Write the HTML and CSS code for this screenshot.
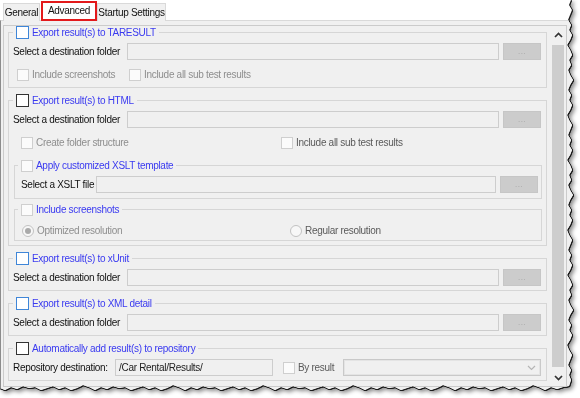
FILE: index.html
```html
<!DOCTYPE html>
<html lang="en">
<head>
    <meta charset="UTF-8">
    <title>Options - Advanced</title>
    <link rel="stylesheet" href="styles.css">
</head>
<body>
<div class="shot">
    <div class="window">
        <div class="tabs">
            <div class="tab">General</div>
            <div class="tab active">Advanced</div>
            <div class="tab">Startup Settings</div>
        </div>
        <div class="panel">
            <div class="scrollbox">
                <div class="content">

                    <!-- TARESULT -->
                    <fieldset class="group">
                        <legend><span class="cb focus"></span><span class="title">Export result(s) to TARESULT</span></legend>
                        <div class="row">
                            <span class="label">Select a destination folder</span>
                            <span class="input"></span>
                            <span class="browse">...</span>
                        </div>
                        <div class="row checks first-checks">
                            <span class="check"><span class="cb small dis"></span>Include screenshots</span>
                            <span class="check"><span class="cb small dis"></span>Include all sub test results</span>
                        </div>
                    </fieldset>

                    <!-- HTML -->
                    <fieldset class="group">
                        <legend><span class="cb"></span><span class="title">Export result(s) to HTML</span></legend>
                        <div class="row">
                            <span class="label">Select a destination folder</span>
                            <span class="input"></span>
                            <span class="browse">...</span>
                        </div>
                        <div class="row checks html-checks">
                            <span class="check"><span class="cb small dis"></span>Create folder structure</span>
                            <span class="check darker"><span class="cb small dis"></span>Include all sub test results</span>
                        </div>

                        <fieldset class="group nested">
                            <legend><span class="cb small dis"></span><span class="title">Apply customized XSLT template</span></legend>
                            <div class="row">
                                <span class="label xslt-label">Select a XSLT file</span>
                                <span class="input"></span>
                                <span class="browse">...</span>
                            </div>
                        </fieldset>

                        <fieldset class="group nested shots">
                            <legend><span class="cb small dis"></span><span class="title">Include screenshots</span></legend>
                            <div class="row radios">
                                <span class="check"><span class="radio on"></span>Optimized resolution</span>
                                <span class="check darker"><span class="radio"></span>Regular resolution</span>
                            </div>
                        </fieldset>
                    </fieldset>

                    <!-- xUnit -->
                    <fieldset class="group">
                        <legend><span class="cb focus"></span><span class="title">Export result(s) to xUnit</span></legend>
                        <div class="row">
                            <span class="label">Select a destination folder</span>
                            <span class="input"></span>
                            <span class="browse">...</span>
                        </div>
                    </fieldset>

                    <!-- XML detail -->
                    <fieldset class="group">
                        <legend><span class="cb focus"></span><span class="title">Export result(s) to XML detail</span></legend>
                        <div class="row">
                            <span class="label">Select a destination folder</span>
                            <span class="input"></span>
                            <span class="browse">...</span>
                        </div>
                    </fieldset>

                    <!-- repository -->
                    <fieldset class="group">
                        <legend><span class="cb"></span><span class="title">Automatically add result(s) to repository</span></legend>
                        <div class="row">
                            <span class="label repo-label">Repository destination:</span>
                            <span class="input repo-input">/Car Rental/Results/</span>
                            <span class="check by-result darker"><span class="cb small dis"></span>By result</span>
                            <span class="combo">
                                <svg width="9" height="6" viewBox="0 0 9 6"><path d="M1 1 L4.5 4.5 L8 1" fill="none" stroke="#b5b5b5" stroke-width="1.2"/></svg>
                            </span>
                        </div>
                    </fieldset>

                </div>
                <div class="scrollbar">
                    <div class="sb-btn">
                        <svg width="9" height="6" viewBox="0 0 9 6"><path d="M1 5 L4.5 1.5 L8 5" fill="none" stroke="#333" stroke-width="1.7"/></svg>
                    </div>
                    <div class="sb-thumb"></div>
                    <div class="sb-btn">
                        <svg width="9" height="6" viewBox="0 0 9 6"><path d="M1 1 L4.5 4.5 L8 1" fill="none" stroke="#333" stroke-width="1.7"/></svg>
                    </div>
                </div>
            </div>
        </div>
    </div>
</div>
</body>
</html>
```

FILE: styles.css
```css
body {
    margin: 0;
    background: #fff;
    font-family: "Liberation Sans", Arial, sans-serif;
    font-size: 10px;
    letter-spacing: -0.3px;
    color: #111;
}

/* screenshot with torn right / bottom edge */
.shot {
    width: 580px;
    height: 398px;
    filter: drop-shadow(1px 0 0 #1c1c1c) drop-shadow(0 1px 0 #1c1c1c) drop-shadow(2px 2px 2px rgba(0, 0, 0, 0.45));
}

.window {
    width: 576px;
    height: 394px;
    background: #fff;
    clip-path: polygon(0 0, 571px 0, 569px 5px, 572px 10px, 570px 15px, 568px 20px, 571px 25px, 569px 30px, 572px 35px, 570px 40px, 567px 45px, 570px 50px, 572px 55px, 569px 60px, 571px 65px, 568px 70px, 570px 75px, 573px 80px, 570px 85px, 568px 90px, 571px 95px, 569px 100px, 572px 105px, 570px 110px, 567px 115px, 569px 120px, 572px 125px, 570px 130px, 568px 135px, 571px 140px, 569px 145px, 572px 150px, 570px 155px, 567px 160px, 570px 165px, 572px 170px, 569px 175px, 571px 180px, 568px 185px, 570px 190px, 573px 195px, 570px 200px, 568px 205px, 571px 210px, 569px 215px, 572px 220px, 570px 225px, 567px 230px, 569px 235px, 572px 240px, 570px 245px, 568px 250px, 571px 255px, 569px 260px, 572px 265px, 570px 270px, 567px 275px, 570px 280px, 572px 285px, 569px 290px, 571px 295px, 568px 300px, 570px 305px, 573px 310px, 570px 315px, 568px 320px, 571px 325px, 569px 330px, 572px 335px, 570px 340px, 567px 345px, 569px 350px, 572px 355px, 570px 360px, 568px 365px, 571px 370px, 569px 375px, 571px 380px, 569px 386px,
        563px 387px, 557px 389px, 551px 387px, 545px 390px, 539px 387px, 533px 385px, 527px 388px, 521px 390px, 515px 387px, 509px 389px, 503px 386px, 497px 388px, 491px 390px, 485px 387px, 479px 388px, 473px 386px, 467px 389px, 461px 387px, 455px 390px, 449px 387px, 443px 385px, 437px 388px, 431px 390px, 425px 387px, 419px 389px, 413px 386px, 407px 388px, 401px 390px, 395px 387px, 389px 388px, 383px 386px, 377px 389px, 371px 387px, 365px 390px, 359px 387px, 353px 385px, 347px 388px, 341px 390px, 335px 387px, 329px 389px, 323px 386px, 317px 388px, 311px 390px, 305px 387px, 299px 388px, 293px 386px, 287px 389px, 281px 387px, 275px 390px, 269px 387px, 263px 385px, 257px 388px, 251px 390px, 245px 387px, 239px 389px, 233px 386px, 227px 388px, 221px 390px, 215px 387px, 209px 388px, 203px 386px, 197px 389px, 191px 387px, 185px 390px, 179px 387px, 173px 385px, 167px 388px, 161px 390px, 155px 387px, 149px 389px, 143px 386px, 137px 388px, 131px 390px, 125px 387px, 119px 388px, 113px 386px, 107px 389px, 101px 387px, 95px 390px, 89px 387px, 83px 385px, 77px 388px, 71px 390px, 65px 387px, 59px 389px, 53px 386px, 47px 388px, 41px 390px, 35px 387px, 29px 388px, 23px 386px, 17px 389px, 11px 387px, 5px 390px, 0 388px);
}

/* tabs */
.tabs {
    display: flex;
    align-items: flex-end;
    height: 21px;
    padding-left: 3px;
}
.tab {
    position: relative;
    height: 18px;
    box-sizing: border-box;
    padding: 0;
    border: 1px solid #d9d9d9;
    border-bottom: none;
    background: #f0f0f0;
    display: flex;
    align-items: center;
    justify-content: center;
    white-space: nowrap;
}
.tab:first-child {
    width: 37px;
    margin-right: 1px;
}
.tab.active {
    width: 56px;
    height: 20px;
    z-index: 1;
    background: #fff;
    border: 2px solid #e3191b;
    padding-bottom: 2px;
}
.tab:last-child {
    width: 69px;
}

/* tab page */
.panel {
    margin-top: -1px;
    height: 380px;
    box-sizing: border-box;
    background: #f0f0f0;
    border: 1px solid #d9d9d9;
    border-left-color: #8c8c8c;
    padding: 4px 0 0 2px;
}
.scrollbox {
    display: flex;
    width: 564px;
    height: 362px;
    box-sizing: border-box;
    border: 1px solid #cbcbcb;
}
.content {
    flex: 1;
    overflow: hidden;
    padding: 0 3px 0 4px;
}

/* group boxes */
.group {
    margin: 6px 0 0;
    padding: 4px 5px 4px 4px;
    border: 1px solid #d6d6d6;
    min-width: 0;
}
.group:first-child {
    margin-top: 0;
}
.group legend {
    display: flex;
    align-items: center;
    height: 13px;
    padding: 0 3px;
}
.title {
    color: #3a3af0;
    margin-left: 3px;
}
.nested {
    margin: 10px -1px 0 1px;
    padding: 4px 3px 5px 6px;
}
.nested legend {
    margin-left: -3px;
}
.nested.shots {
    margin-top: 4px;
    padding-bottom: 3px;
}

/* rows */
.row {
    display: flex;
    align-items: center;
    height: 17px;
}
.label {
    width: 114px;
    flex: none;
    white-space: nowrap;
}
.xslt-label {
    width: 75px;
}
.repo-label {
    width: 102px;
}
.input {
    flex: 1;
    height: 17px;
    box-sizing: border-box;
    border: 1px solid #cdcdcd;
    background: #f0f0f0;
    margin-right: 4px;
    display: flex;
    align-items: center;
    padding-left: 3px;
    color: #222;
}
.repo-input {
    flex: none;
    width: 158px;
    margin-right: 10px;
}
.browse {
    width: 38px;
    height: 17px;
    box-sizing: border-box;
    background: #cccccc;
    border: 1px solid #c6c6c6;
    color: #a2a2a2;
    font-size: 8px;
    display: flex;
    align-items: center;
    justify-content: center;
    letter-spacing: 0.5px;
}

/* checkbox rows */
.checks {
    margin-top: 8px;
    height: 13px;
}
.first-checks {
    padding-left: 4px;
    margin-bottom: 2px;
}
.first-checks .check:first-child {
    width: 112px;
}
.html-checks {
    padding-left: 8px;
}
.html-checks .check:first-child {
    width: 260px;
}
.radios {
    margin-top: 4px;
    padding-left: 1px;
    height: 13px;
}
.radios .check:first-child {
    width: 268px;
}
.check {
    display: flex;
    align-items: center;
    color: #8e8e8e;
    white-space: nowrap;
}
.check.darker {
    color: #5a5a5a;
}
.check .cb,
.check .radio {
    margin-right: 3px;
}
.by-result {
    width: 60px;
}

.cb {
    display: inline-block;
    width: 13px;
    height: 13px;
    box-sizing: border-box;
    border: 1px solid #333;
    background: #fff;
    flex: none;
}
.cb.focus {
    border-color: #3f86d8;
}
.cb.small {
    width: 12px;
    height: 12px;
}
.cb.dis {
    border-color: #cfcfcf;
    background: #fbfbfb;
}
.radio {
    width: 12px;
    height: 12px;
    box-sizing: border-box;
    border-radius: 50%;
    border: 1px solid #c2c2c2;
    background: #f7f7f7;
    flex: none;
    display: flex;
    align-items: center;
    justify-content: center;
}
.radio.on::after {
    content: "";
    width: 6px;
    height: 6px;
    border-radius: 50%;
    background: #a9a9a9;
}

.combo {
    flex: 1;
    height: 17px;
    box-sizing: border-box;
    border: 1px solid #c9c9c9;
    box-shadow: inset 0 0 0 1px #e4e4e4;
    background: #f0f0f0;
    display: flex;
    align-items: center;
    justify-content: flex-end;
    padding-right: 4px;
}

/* scrollbar */
.scrollbar {
    width: 16px;
    flex: none;
    display: flex;
    flex-direction: column;
    background: #f0f0f0;
}
.sb-btn {
    height: 17px;
    display: flex;
    align-items: center;
    justify-content: center;
}
.sb-thumb {
    flex: 1;
    margin: 2px 2px;
    background: #cdcdcd;
}
```
